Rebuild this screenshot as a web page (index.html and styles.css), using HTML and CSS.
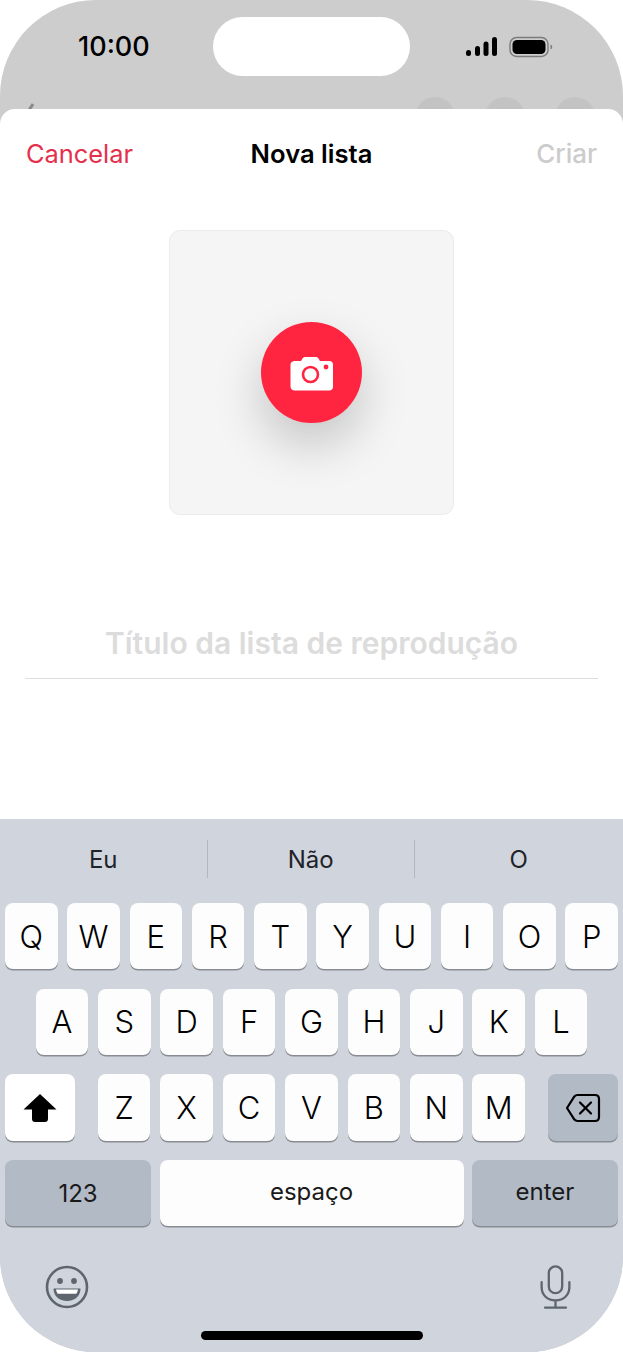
FILE: index.html
```html
<!DOCTYPE html>
<html>

<head>
    <title>Nova lista</title>
    <link rel="stylesheet" href="styles.css">
</head>

<body>
    <div class="phone">
        <div class="top">
            <div class="status">
                <div class="time">10:00</div>
                <div class="island"></div>
                <div class="status-icons">
                    <svg width="32" height="20" viewBox="0 0 32 20">
                        <rect x="0" y="13" width="5" height="6" rx="2.5" />
                        <rect x="9" y="9" width="5" height="10" rx="2.5" />
                        <rect x="17.500" y="4.500" width="5" height="14.500" rx="2.500" />
                        <rect x="26" y="0" width="5" height="19" rx="2.500" />
                    </svg>
                    <svg width="44" height="22" viewBox="0 0 44 22">
                        <rect x="1" y="1.500" width="38" height="19" rx="6.500" fill="none" stroke="#7b7b7b" stroke-width="1.400" />
                        <rect x="3.500" y="4" width="33" height="14" rx="4.500" />
                        <path d="M41.500 8.500c1.200.5 1.700 1.400 1.700 2.500s-.5 2-1.700 2.500z" fill="#7b7b7b" />
                    </svg>
                </div>
            </div>
            <div class="nav-peek">
                <svg class="peek-back" width="12" height="14" viewBox="0 0 12 14">
                    <path d="M9 1 2 12" fill="none" stroke="#8a8a8a" stroke-width="3" />
                </svg>
                <div class="peek-dot"></div>
                <div class="peek-dot"></div>
                <div class="peek-dot"></div>
            </div>
        </div>

        <div class="sheet">
            <div class="sheet-head">
                <div class="cancel">Cancelar</div>
                <div class="sheet-title">Nova lista</div>
                <div class="create">Criar</div>
            </div>
            <div class="cover">
                <div class="camera-btn">
                    <svg class="camera-icon" width="44" height="34" viewBox="0 0 44 34">
                        <path fill="#fff" d="M12.500 1.500C13 .6 14 0 15 0h11c1 0 2 .6 2.500 1.500L30 4h9.500C41.500 4 43 5.500 43 7.500V30c0 2-1.500 3.400-3.500 3.400h-35C2.500 33.400 .5 32 .5 30V7.500C.5 5.500 2.500 4 4.500 4H11z" />
                        <circle cx="20.500" cy="17.500" r="7.500" fill="none" stroke="#ff2540" stroke-width="2.600" />
                        <circle cx="36" cy="10" r="2.400" fill="#ff2540" />
                    </svg>
                </div>
            </div>
            <div class="title-field">Título da lista de reprodução</div>
        </div>

        <div class="keyboard">
            <div class="suggestions">
                <div class="suggestion">Eu</div>
                <div class="suggestion">Não</div>
                <div class="suggestion">O</div>
            </div>
            <div class="keys">
                <div class="key-row">
                    <div class="key">Q</div>
                    <div class="key">W</div>
                    <div class="key">E</div>
                    <div class="key">R</div>
                    <div class="key">T</div>
                    <div class="key">Y</div>
                    <div class="key">U</div>
                    <div class="key">I</div>
                    <div class="key">O</div>
                    <div class="key">P</div>
                </div>
                <div class="key-row centered">
                    <div class="key">A</div>
                    <div class="key">S</div>
                    <div class="key">D</div>
                    <div class="key">F</div>
                    <div class="key">G</div>
                    <div class="key">H</div>
                    <div class="key">J</div>
                    <div class="key">K</div>
                    <div class="key">L</div>
                </div>
                <div class="key-row">
                    <div class="key wide shift">
                        <svg width="34" height="30" viewBox="0 0 34 30">
                            <path d="M17 1 33.500 16.500H25V26c0 1.800-1.200 3-3 3H12c-1.800 0-3-1.200-3-3V16.500H.5z" />
                        </svg>
                    </div>
                    <div class="key">Z</div>
                    <div class="key">X</div>
                    <div class="key">C</div>
                    <div class="key">V</div>
                    <div class="key">B</div>
                    <div class="key">N</div>
                    <div class="key">M</div>
                    <div class="key wide dark">
                        <svg width="36" height="30" viewBox="0 0 36 30">
                            <path d="M12.500 2H30c2.500 0 4 1.500 4 4v18c0 2.500-1.500 4-4 4H12.500c-1.300 0-2.300-.5-3.100-1.400L2 15l7.400-11.600C10.200 2.500 11.200 2 12.500 2z" fill="none" stroke="#000" stroke-width="2.200" stroke-linejoin="round" />
                            <path d="M15 9.500 26 20.500M26 9.500 15 20.500" fill="none" stroke="#000" stroke-width="2.200" stroke-linecap="round" />
                        </svg>
                    </div>
                </div>
                <div class="key-row">
                    <div class="key small-text dark numbers">123</div>
                    <div class="key small-text lifted space">espaço</div>
                    <div class="key small-text lifted dark enter">enter</div>
                </div>
            </div>
            <div class="kb-bottom">
                <svg width="44" height="44" viewBox="0 0 44 44">
                    <circle cx="22" cy="22" r="20" fill="none" stroke="#5f656e" stroke-width="2.600" />
                    <circle cx="15" cy="16" r="2.900" fill="#5f656e" />
                    <circle cx="29" cy="16" r="2.900" fill="#5f656e" />
                    <path d="M8.500 23.500h27C35.500 31 30 36 22 36S8.500 31 8.500 23.500z" fill="#5f656e" />
                    <path d="M11 24.500h22c-.3 1.600-.8 3-1.600 4.200H12.600c-.8-1.200-1.300-2.600-1.600-4.200z" fill="#fff" />
                </svg>
                <svg width="31" height="44" viewBox="0 0 32 46">
                    <rect x="9" y="1.500" width="14" height="28" rx="7" fill="none" stroke="#5f656e" stroke-width="2.400" />
                    <path d="M1.500 18v5c0 8.500 6 14 14.500 14s14.500-5.500 14.500-14v-5M16 37v7M5 44.500h22" fill="none" stroke="#5f656e" stroke-width="2.400" stroke-linecap="round" />
                </svg>
            </div>
            <div class="home-bar"></div>
        </div>
    </div>
</body>

</html>
```

FILE: styles.css
```css
* {
    box-sizing: border-box;
}

body {
    margin: 0;
    background-color: #fff;
    font-family: Inter, "Noto Sans", sans-serif;
    color: #000;
}

.phone {
    width: 623px;
    height: 1352px;
    border-radius: 96px;
    overflow: hidden;
    background-color: #cdcdcd;
    display: flex;
    flex-direction: column;
}

/* status bar + page behind the sheet */
.top {
    height: 109px;
    overflow: hidden;
    flex-shrink: 0;
}

.status {
    height: 76px;
    padding: 17px 70px 0 78px;
    display: flex;
}

.time {
    width: 72px;
    height: 59px;
    line-height: 60px;
    font-size: 27px;
    font-weight: 500;
}

.island {
    width: 197px;
    height: 59px;
    margin-left: 63px;
    border-radius: 30px;
    background-color: #fff;
}

.status-icons {
    height: 59px;
    margin-left: auto;
    display: flex;
    gap: 11px;
    align-items: center;
}

.nav-peek {
    margin-top: 21px;
    padding: 0 28px 0 24px;
    display: flex;
    gap: 30px;
}

.peek-back {
    margin-top: 6px;
    margin-right: auto;
}

.peek-dot {
    width: 40px;
    height: 40px;
    border-radius: 50%;
    background-color: #c3c3c3;
}

/* sheet */
.sheet {
    height: 710px;
    flex-shrink: 0;
    background-color: #fff;
    border-radius: 15px 15px 0 0;
}

.sheet-head {
    height: 89px;
    padding: 0 26px;
    display: grid;
    grid-template-columns: 1fr auto 1fr;
    align-items: center;
    font-size: 25.4px;
}

.cancel {
    color: #e5304c;
}

.sheet-title {
    font-size: 25.6px;
    font-weight: 600;
}

.create {
    text-align: right;
    color: #cccccc;
    font-size: 26px;
    font-weight: 500;
}

.cover {
    width: 285px;
    height: 285px;
    margin: 32px 0 0 169px;
    background-color: #f5f5f5;
    border: 1px solid #ebebeb;
    border-radius: 11px;
    display: flex;
    align-items: center;
    justify-content: center;
}

.camera-btn {
    width: 101px;
    height: 101px;
    border-radius: 50%;
    background-color: #ff2540;
    box-shadow: 0 22px 50px rgba(0, 0, 0, 0.2);
    display: flex;
    align-items: center;
    justify-content: center;
}

.camera-icon {
    margin-top: 3px;
}

.title-field {
    height: 74px;
    margin: 90px 25px 0;
    padding-top: 20px;
    border-bottom: 1px solid #dedede;
    text-align: center;
    font-size: 30px;
    font-weight: 600;
    color: #dcdcdc;
}

/* keyboard */
.keyboard {
    position: relative;
    flex: 1;
    background-color: #cfd4dd;
}

.suggestions {
    height: 84px;
    padding-top: 21px;
    display: flex;
}

.suggestion {
    width: 207.5px;
    height: 38px;
    line-height: 40px;
    text-align: center;
    font-size: 24px;
    color: #1f2329;
    border-right: 1px solid #b2b8c3;
}

.suggestion:last-child {
    border-right: none;
}

.keys {
    padding: 0 5px;
    display: flex;
    flex-direction: column;
    gap: 19.4px;
}

.key-row {
    display: flex;
    justify-content: space-between;
}

.key-row.centered {
    justify-content: center;
    gap: 9.8px;
}

.key {
    width: 52.6px;
    height: 66.3px;
    border-radius: 8px;
    background-color: #fdfdfd;
    box-shadow: 0 1.5px 0 #898c92;
    display: flex;
    align-items: center;
    justify-content: center;
    font-size: 31px;
    font-weight: 350;
}

.key.wide {
    width: 70px;
    margin-right: 13px;
}

.key.shift {
    background-color: #fff;
}

.key.dark {
    background-color: #b2bac6;
    margin-right: 0;
    margin-left: 13px;
}

.key.small-text {
    font-size: 24px;
    font-weight: 400;
    color: #1a1a1a;
}

.key.lifted {
    padding-bottom: 3px;
}

.key.numbers {
    width: 146px;
    margin-left: 0;
}

.key.space {
    width: 304px;
}

.key.enter {
    width: 146px;
    margin-left: 0;
}

.kb-bottom {
    margin-top: 39px;
    padding: 0 52px 0 45px;
    display: flex;
    justify-content: space-between;
    align-items: center;
}

.home-bar {
    position: absolute;
    left: 201px;
    bottom: 12px;
    width: 222px;
    height: 9px;
    border-radius: 5px;
    background-color: #000;
}
```
